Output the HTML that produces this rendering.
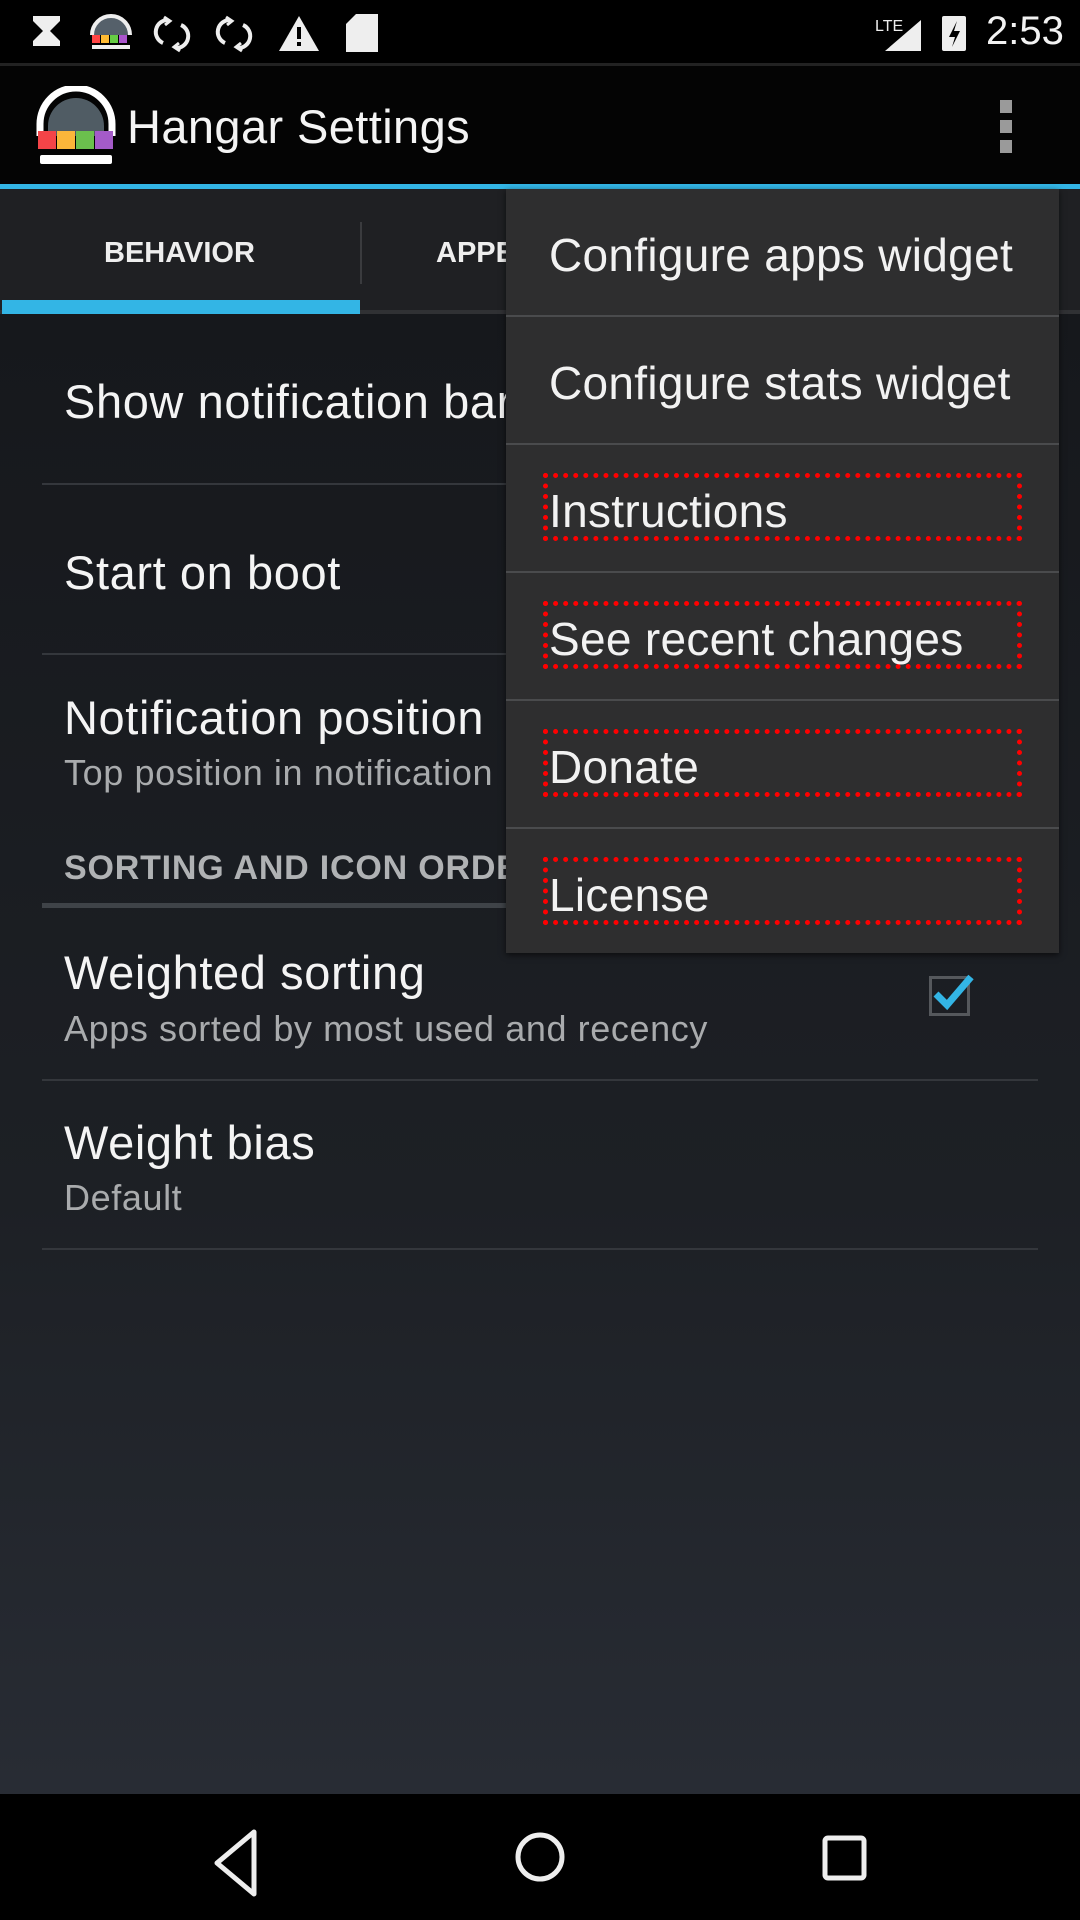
<!DOCTYPE html>
<html><head><meta charset="utf-8"><style>
*{margin:0;padding:0;box-sizing:border-box}
body{width:1080px;height:1920px;overflow:hidden;position:relative;font-family:"Liberation Sans",sans-serif;background:linear-gradient(#121417 0px,#16181c 300px,#1d2025 1200px,#282c34 1794px);color:#f2f2f2}
.abs{position:absolute}
.t{position:absolute;left:64px;font-size:47px;color:#f4f4f4;white-space:nowrap;letter-spacing:0.6px}
.s{position:absolute;left:64px;font-size:36px;color:#a9abad;white-space:nowrap;letter-spacing:0.6px}
.hr{position:absolute;left:42px;width:996px;height:2px;background:#34373c}
.mi{position:absolute;left:549px;font-size:46px;color:#f2f2f2;white-space:nowrap;letter-spacing:0.3px}
.md{position:absolute;left:506px;width:553px;height:2px;background:#4a4b4d}
.box{position:absolute;left:543px;width:479px;height:68px;border:5px dotted #ff0000}
</style></head><body>
<div class="abs" style="left:0;top:0;width:1080px;height:64px;background:#000"></div>
<div class="abs" style="left:0;top:63px;width:1080px;height:3px;background:#222"></div>
<svg class="abs" style="left:0;top:0" width="1080" height="64">
 <path d="M33 16h27v5l-10 10 10 10v5H33v-5l10-10-10-10z" fill="#eee"/>
 <path d="M92 35a19 19 0 0 1 38 0" stroke="#eee" stroke-width="4" fill="#55606a"/>
 <rect x="92" y="35" width="8" height="8" fill="#f44"/><rect x="101" y="35" width="8" height="8" fill="#fb3"/><rect x="110" y="35" width="8" height="8" fill="#6c4"/><rect x="119" y="35" width="8" height="8" fill="#a5c"/>
 <rect x="92" y="45" width="38" height="4" fill="#eee"/>
 <path d="M168 20a12 12 0 0 0-5 23M176 48a12 12 0 0 0 5-23" stroke="#eee" stroke-width="4" fill="none"/>
 <path d="M164 17l6 4-5 4M180 51l-6-4 5-4" stroke="#eee" stroke-width="3" fill="none"/>
 <path d="M230 20a12 12 0 0 0-5 23M238 48a12 12 0 0 0 5-23" stroke="#eee" stroke-width="4" fill="none"/>
 <path d="M226 17l6 4-5 4M242 51l-6-4 5-4" stroke="#eee" stroke-width="3" fill="none"/>
 <path d="M299 16l20 35h-40z" fill="#eee"/><rect x="297" y="27" width="4" height="12" fill="#000"/><rect x="297" y="42" width="4" height="4" fill="#000"/>
 <path d="M356 14h22v38h-32V24z" fill="#eee"/>
 <text x="875" y="31" font-size="16" fill="#eee" font-family="Liberation Sans">LTE</text>
 <path d="M921 20v31h-36z" fill="#eee"/>
 <rect x="942" y="16" width="24" height="35" rx="2" fill="#eee"/><path d="M957 21l-8 16h6l-3 10 8-16h-6z" fill="#000"/>
 <text x="986" y="44" font-size="40" fill="#f2f2f2" font-family="Liberation Sans">2:53</text>
</svg>
<div class="abs" style="left:0;top:66px;width:1080px;height:118px;background:#040404"></div>
<svg class="abs" style="left:36px;top:86px" width="80" height="80">
 <path d="M4 50V38a36 36 0 0 1 72 0v12" stroke="#fff" stroke-width="7" fill="none"/>
 <path d="M12 50V40a28 28 0 0 1 56 0v10z" fill="#505c64"/>
 <rect x="2" y="45" width="18" height="18" fill="#f44448"/><rect x="21" y="45" width="18" height="18" fill="#fbb63a"/><rect x="40" y="45" width="18" height="18" fill="#6bc04d"/><rect x="59" y="45" width="18" height="18" fill="#a45bc8"/>
 <rect x="4" y="69" width="72" height="9" rx="2" fill="#fff"/>
</svg>
<div class="abs" style="left:127px;top:99px;font-size:47px;color:#f4f4f4;letter-spacing:0.4px">Hangar Settings</div>
<div class="abs" style="left:1000px;top:100px;width:12px;height:13px;background:#9a9a9a"></div>
<div class="abs" style="left:1000px;top:120px;width:12px;height:13px;background:#9a9a9a"></div>
<div class="abs" style="left:1000px;top:140px;width:12px;height:13px;background:#9a9a9a"></div>
<div class="abs" style="left:0;top:184px;width:1080px;height:5px;background:#33b5e5"></div>
<div class="abs" style="left:0;top:189px;width:1080px;height:124px;background:#1f2023"></div>
<div class="abs" style="left:104px;top:237px;font-size:29px;font-weight:bold;color:#eee">BEHAVIOR</div>
<div class="abs" style="left:436px;top:237px;font-size:29px;font-weight:bold;color:#eee">APPEARANCE</div>
<div class="abs" style="left:360px;top:222px;width:2px;height:62px;background:#3a3b3e"></div>
<div class="abs" style="left:0;top:310px;width:1080px;height:4px;background:#303134"></div>
<div class="abs" style="left:2px;top:300px;width:358px;height:14px;background:#33b5e5"></div>
<div class="t" style="top:374px">Show notification bar</div>
<div class="hr" style="top:483px"></div>
<div class="t" style="top:545px">Start on boot</div>
<div class="hr" style="top:653px"></div>
<div class="t" style="top:690px">Notification position</div>
<div class="s" style="top:752px">Top position in notification</div>
<div class="abs" style="left:64px;top:849px;font-size:34px;font-weight:bold;color:#b0b2b4;white-space:nowrap;letter-spacing:0.8px">SORTING AND ICON ORDER</div>
<div class="abs" style="left:42px;top:903px;width:996px;height:5px;background:#3f4348"></div>
<div class="t" style="top:945px">Weighted sorting</div>
<div class="s" style="top:1008px">Apps sorted by most used and recency</div>
<div class="abs" style="left:929px;top:976px;width:41px;height:40px;border:3px solid #55585c"></div>
<svg class="abs" style="left:930px;top:968px" width="50" height="44"><path d="M6 26l11 11 24-28" stroke="#33b5e5" stroke-width="7" fill="none"/></svg>
<div class="hr" style="top:1079px"></div>
<div class="t" style="top:1115px">Weight bias</div>
<div class="s" style="top:1177px">Default</div>
<div class="hr" style="top:1248px"></div>
<div class="abs" style="left:506px;top:189px;width:553px;height:764px;background:#2e2e2f;box-shadow:0 2px 6px rgba(0,0,0,.6)"></div>
<div class="mi" style="top:228px">Configure apps widget</div>
<div class="md" style="top:315px"></div>
<div class="mi" style="top:356px">Configure stats widget</div>
<div class="md" style="top:443px"></div>
<div class="box" style="top:473px"></div>
<div class="mi" style="top:484px">Instructions</div>
<div class="md" style="top:571px"></div>
<div class="box" style="top:601px"></div>
<div class="mi" style="top:612px">See recent changes</div>
<div class="md" style="top:699px"></div>
<div class="box" style="top:729px"></div>
<div class="mi" style="top:740px">Donate</div>
<div class="md" style="top:827px"></div>
<div class="box" style="top:857px"></div>
<div class="mi" style="top:868px">License</div>
<div class="abs" style="left:0;top:1794px;width:1080px;height:126px;background:#000"></div>
<svg class="abs" style="left:0;top:1794px" width="1080" height="126">
 <path d="M254 38v62l-37-31z" stroke="#eee" stroke-width="5" fill="none" stroke-linejoin="round"/>
 <circle cx="540" cy="63" r="22" stroke="#eee" stroke-width="5" fill="none"/>
 <rect x="825" y="44" width="39" height="40" rx="3" stroke="#eee" stroke-width="5" fill="none"/>
</svg>
</body></html>
